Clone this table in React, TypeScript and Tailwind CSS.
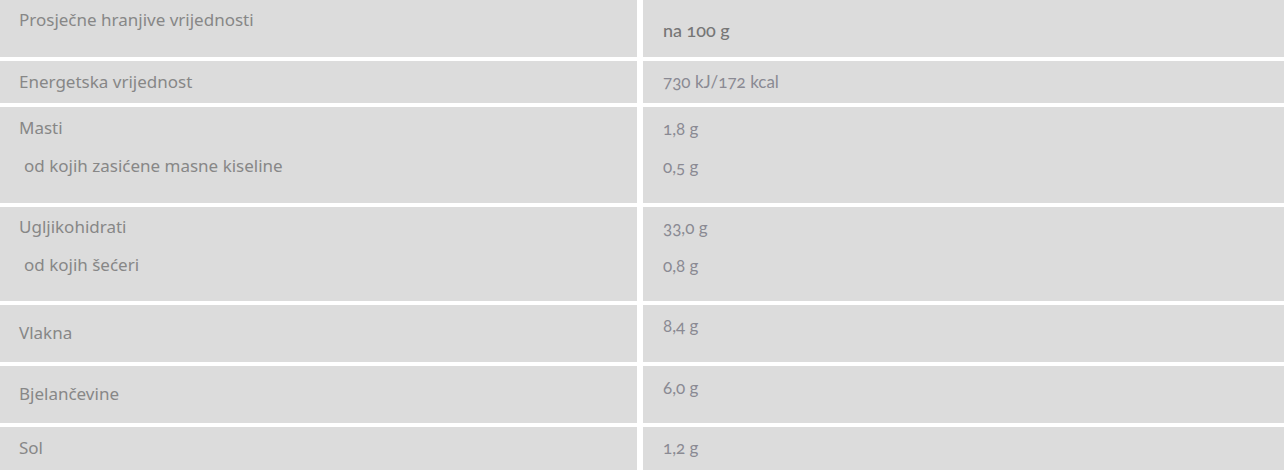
type Row = {
  label: string[]
  value: string[]
  height: string
  labelPad: string
  valuePad: string
}

const rows: Row[] = [
  { label: ['Energetska vrijednost'], value: ['730 kJ/172 kcal'], height: 'h-[42px]', labelPad: 'pt-[11px]', valuePad: 'pt-[11px]' },
  {
    label: ['Masti', 'od kojih zasićene masne kiseline'],
    value: ['1,8 g', '0,5 g'],
    height: 'h-[96px]',
    labelPad: 'pt-[11px]',
    valuePad: 'pt-[12px]',
  },
  {
    label: ['Ugljikohidrati', 'od kojih šećeri'],
    value: ['33,0 g', '0,8 g'],
    height: 'h-[94px]',
    labelPad: 'pt-[10px]',
    valuePad: 'pt-[11px]',
  },
  { label: ['Vlakna'], value: ['8,4 g'], height: 'h-[57px]', labelPad: 'pt-[18px]', valuePad: 'pt-[11px]' },
  { label: ['Bjelančevine'], value: ['6,0 g'], height: 'h-[57px]', labelPad: 'pt-[18px]', valuePad: 'pt-[12px]' },
  { label: ['Sol'], value: ['1,2 g'], height: 'h-[50px]', labelPad: 'pt-[11px]', valuePad: 'pt-[11px]' },
]

const labelFont = "font-['Noto_Sans',sans-serif] text-[17px] leading-[20px] text-[#878787]"
const valueFont = "font-['Lato',sans-serif] oldstyle-nums text-[17px] leading-[20px] text-[#8a8a93]"

export default function App() {
  return (
    <div className="w-[1284px] h-[470px] overflow-hidden bg-white">
      <div className="grid grid-cols-[637px_1fr] gap-x-[6px] gap-y-[4px]">
        <div className={`h-[57px] bg-[#dcdcdc] pl-[19px] pt-[10px] ${labelFont}`}>Prosječne hranjive vrijednosti</div>
        <div className="h-[57px] bg-[#dcdcdc] pl-[20px] pt-[20px] font-['Lato',sans-serif] oldstyle-nums text-[18px] leading-[20px] font-medium text-[#767676]">
          na 100 g
        </div>

        {rows.map((row) => (
          <RowCells key={row.label[0]} row={row} />
        ))}
      </div>
    </div>
  )
}

function RowCells({ row }: { row: Row }) {
  return (
    <>
      <div className={`${row.height} bg-[#dcdcdc] pl-[19px] ${row.labelPad} flex flex-col gap-[18px] ${labelFont}`}>
        {row.label.map((text, i) => (
          <span key={text} className={i > 0 ? 'pl-[5px]' : ''}>
            {text}
          </span>
        ))}
      </div>
      <div className={`${row.height} bg-[#dcdcdc] pl-[20px] ${row.valuePad} flex flex-col gap-[18px] ${valueFont}`}>
        {row.value.map((text) => (
          <span key={text}>{text}</span>
        ))}
      </div>
    </>
  )
}
